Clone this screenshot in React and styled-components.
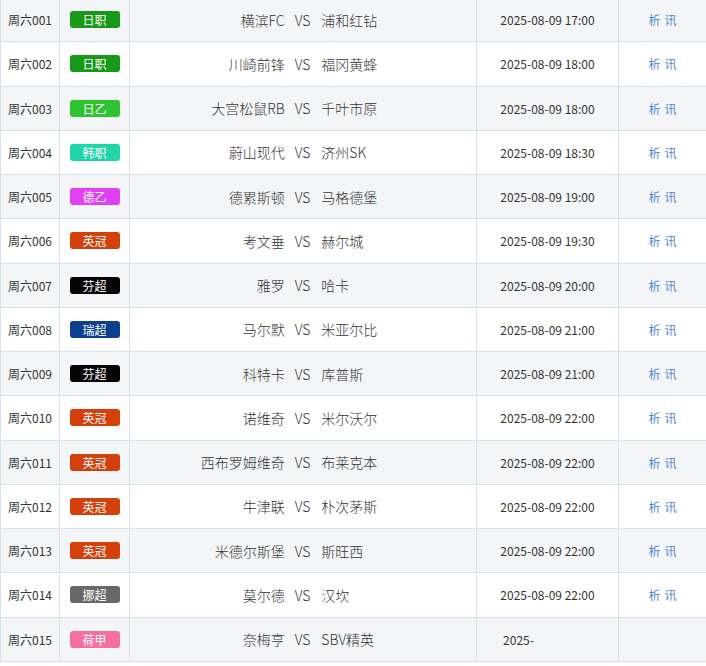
import React from "react";
import styled, { createGlobalStyle } from "styled-components";

const G = createGlobalStyle`
  body{margin:0;background:#fff;font-family:"Noto Sans CJK SC","Noto Sans",sans-serif;color:#333;overflow:hidden;}
`;
const Table = styled.div`margin-top:-2px;border-left:1px solid #d8e2ee;`;
const Row = styled.div`
  display:grid;grid-template-columns:59px 70px 347px 142px 88px;
  height:44.25px;background:${p=>p.$alt?"#f4f5f7":"#fff"};border-bottom:1px solid #d8e2ee;box-sizing:border-box;
`;
const Cell = styled.div`
  display:flex;align-items:center;justify-content:${p=>p.$j||"center"};
  border-right:1px solid #d8e2ee;font-size:12px;color:#333;
`;
const Badge = styled.span`
  width:50px;height:17px;border-radius:3px;background:${p=>p.$c};color:#fff;
  font-size:12px;line-height:17px;text-align:center;
`;
const Teams = styled.div`
  display:grid;grid-template-columns:1fr auto 1fr;align-items:center;border-right:1px solid #d8e2ee;font-size:14px;color:#333;font-weight:300;
`;
const Home = styled.span`text-align:right;`;
const Vs = styled.span`padding:0 11px 0 10px;`;
const Link = styled.a`color:#4d86d6;font-size:12px;letter-spacing:4px;margin-left:4px;`;

const C={ "日职":"#179a17","日乙":"#2fc32f","韩职":"#1fd6a9","德乙":"#e13ef5","英冠":"#d4400c","芬超":"#050505","瑞超":"#0c3f8d","挪超":"#686868","荷甲":"#f56f9f"};
const data=[
["001","日职","横滨FC","浦和红钻","17:00"],
["002","日职","川崎前锋","福冈黄蜂","18:00"],
["003","日乙","大宫松鼠RB","千叶市原","18:00"],
["004","韩职","蔚山现代","济州SK","18:30"],
["005","德乙","德累斯顿","马格德堡","19:00"],
["006","英冠","考文垂","赫尔城","19:30"],
["007","芬超","雅罗","哈卡","20:00"],
["008","瑞超","马尔默","米亚尔比","21:00"],
["009","芬超","科特卡","库普斯","21:00"],
["010","英冠","诺维奇","米尔沃尔","22:00"],
["011","英冠","西布罗姆维奇","布莱克本","22:00"],
["012","英冠","牛津联","朴次茅斯","22:00"],
["013","英冠","米德尔斯堡","斯旺西","22:00"],
["014","挪超","莫尔德","汉坎","22:00"],
["015","荷甲","奈梅亨","SBV精英",null],
];
export default function App(){
  return <><G/><Table>{data.map((d,i)=>(
    <Row key={i} $alt={i%2===0}>
      <Cell>周六{d[0]}</Cell>
      <Cell><Badge $c={C[d[1]]}>{d[1]}</Badge></Cell>
      <Teams><Home>{d[2]}</Home><Vs>VS</Vs><span>{d[3]}</span></Teams>
      <Cell>{d[4]?`2025-08-09 ${d[4]}`:<span style={{marginRight:58}}>2025-</span>}</Cell>
      <Cell>{d[4]&&<Link>析讯</Link>}</Cell>
    </Row>))}</Table></>;
}
